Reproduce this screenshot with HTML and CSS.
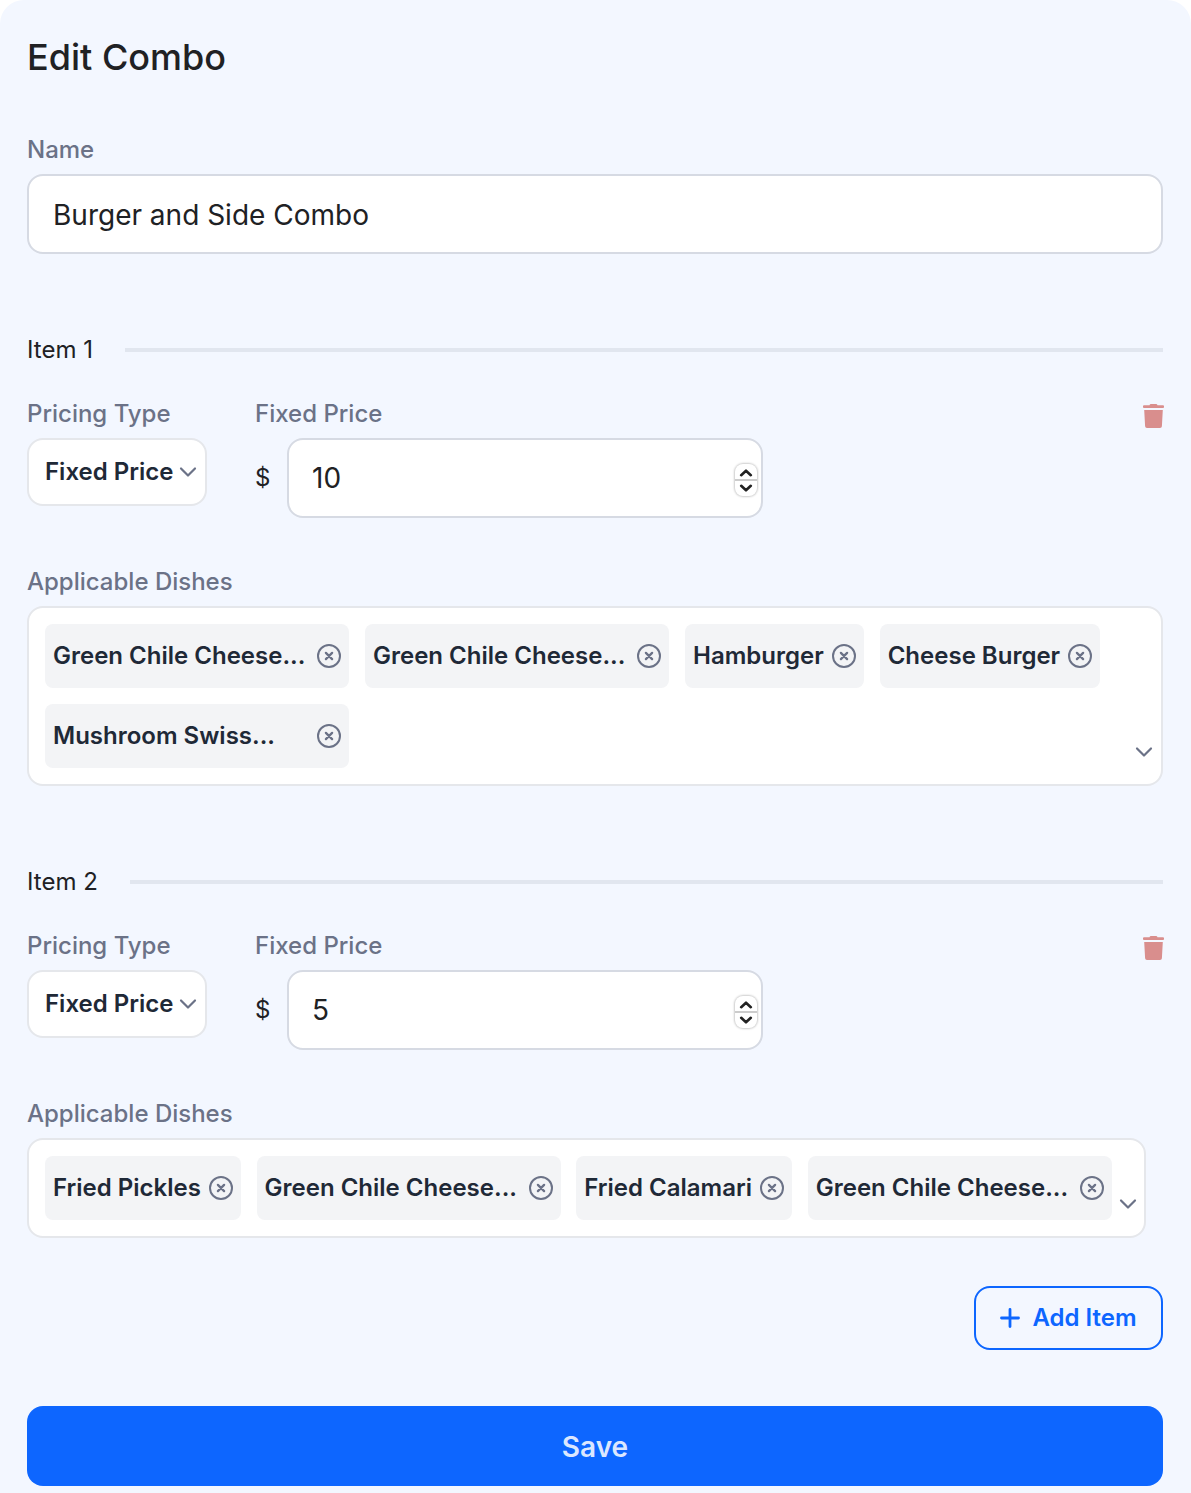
FILE: index.html
```html
<!DOCTYPE html>
<html lang="en">
<head>
<meta charset="utf-8">
<title>Edit Combo</title>
<link rel="stylesheet" href="styles.css">
</head>
<body>
<svg class="sprite" aria-hidden="true">
  <symbol id="chevron" viewBox="0 0 20 12"><path d="M3 2.500l7 7 7-7" fill="none" stroke="currentColor" stroke-width="2.200" stroke-linecap="round" stroke-linejoin="round"/></symbol>
  <symbol id="remove" viewBox="0 0 24 24"><circle cx="12" cy="12" r="11" fill="none" stroke="currentColor" stroke-width="2"/><path d="M8.900 8.900l6.200 6.200M15.100 8.900l-6.200 6.200" fill="none" stroke="currentColor" stroke-width="2.300" stroke-linecap="round"/></symbol>
  <symbol id="trash" viewBox="0 0 22 24"><path d="M6.500 1.200Q6.800 0 8 0h5q1.200 0 1.500 1.200H20q1 0 1 1v1q0 .8-1 .8H1q-1 0-1-.8v-1q0-1 1-1zM1.200 6h18.600l-.9 16.200q-.1 1.800-1.900 1.800H4q-1.800 0-1.900-1.800z" fill="currentColor"/></symbol>
  <symbol id="plus" viewBox="0 0 20 20"><path d="M10 1.500v17M1.500 10h17" fill="none" stroke="currentColor" stroke-width="2.800" stroke-linecap="round"/></symbol>
  <symbol id="step" viewBox="0 0 14 8"><path d="M2.200 6.200L7 1.700l4.800 4.500" fill="none" stroke="currentColor" stroke-width="2.600" stroke-linecap="round" stroke-linejoin="round"/></symbol>
</svg>
<main class="panel">
  <h1 class="title">Edit Combo</h1>
  <label class="label" for="name">Name</label>
  <input class="input" id="name" value="Burger and Side Combo">

  <section class="item">
    <h2 class="item-head">Item 1</h2>
    <div class="pricing">
      <div class="type">
        <span class="label">Pricing Type</span>
        <button class="select">Fixed Price<svg class="chevron"><use href="#chevron"/></svg></button>
      </div>
      <div class="price">
        <label class="label" for="price1">Fixed Price</label>
        <div class="money">
          <span class="currency">$</span>
          <div class="number">
            <input class="number-input" id="price1" value="10">
            <span class="stepper"><span class="step"><svg><use href="#step"/></svg></span><span class="step step-down"><svg><use href="#step"/></svg></span></span>
          </div>
        </div>
      </div>
      <button class="delete" aria-label="Delete"><svg><use href="#trash"/></svg></button>
    </div>
    <span class="label">Applicable Dishes</span>
    <div class="dishes">
      <div class="tags">
        <span class="tag"><span class="tag-text tag-clamped">Green Chile Cheese...</span><svg><use href="#remove"/></svg></span>
        <span class="tag"><span class="tag-text tag-clamped">Green Chile Cheese...</span><svg><use href="#remove"/></svg></span>
        <span class="tag"><span class="tag-text">Hamburger</span><svg><use href="#remove"/></svg></span>
        <span class="tag"><span class="tag-text">Cheese Burger</span><svg><use href="#remove"/></svg></span>
        <span class="tag"><span class="tag-text tag-clamped">Mushroom Swiss...</span><svg><use href="#remove"/></svg></span>
      </div>
      <svg class="chevron"><use href="#chevron"/></svg>
    </div>
  </section>

  <section class="item">
    <h2 class="item-head">Item 2</h2>
    <div class="pricing">
      <div class="type">
        <span class="label">Pricing Type</span>
        <button class="select">Fixed Price<svg class="chevron"><use href="#chevron"/></svg></button>
      </div>
      <div class="price">
        <label class="label" for="price2">Fixed Price</label>
        <div class="money">
          <span class="currency">$</span>
          <div class="number">
            <input class="number-input" id="price2" value="5">
            <span class="stepper"><span class="step"><svg><use href="#step"/></svg></span><span class="step step-down"><svg><use href="#step"/></svg></span></span>
          </div>
        </div>
      </div>
      <button class="delete" aria-label="Delete"><svg><use href="#trash"/></svg></button>
    </div>
    <span class="label">Applicable Dishes</span>
    <div class="dishes dishes-fit">
      <div class="tags">
        <span class="tag"><span class="tag-text">Fried Pickles</span><svg><use href="#remove"/></svg></span>
        <span class="tag"><span class="tag-text tag-clamped">Green Chile Cheese...</span><svg><use href="#remove"/></svg></span>
        <span class="tag"><span class="tag-text">Fried Calamari</span><svg><use href="#remove"/></svg></span>
        <span class="tag"><span class="tag-text tag-clamped">Green Chile Cheese...</span><svg><use href="#remove"/></svg></span>
      </div>
      <svg class="chevron"><use href="#chevron"/></svg>
    </div>
  </section>

  <button class="add"><svg><use href="#plus"/></svg>Add Item</button>
  <button class="save">Save</button>
</main>
</body>
</html>
```

FILE: styles.css
```css
* { box-sizing: border-box; }
body { margin: 0; background: #fff; font-family: Inter, sans-serif; color: #202124; }
button, input { font: inherit; margin: 0; }
svg { display: block; flex: none; }
.sprite { width: 0; height: 0; position: absolute; }
.panel { display: flex; flex-direction: column; height: 1493px; overflow: hidden; padding: 35px 28px 0 27px; background: #f3f7ff; border-radius: 24px 24px 0 0; }
.title { margin: 0 0 55px; font-size: 36px; line-height: 44px; font-weight: 500; }
.label { display: block; margin-bottom: 8px; font-size: 24px; line-height: 32px; font-weight: 500; color: #6b7287; }
.input, .number, .select, .dishes { background: #fff; border: 2px solid #d6dae3; border-radius: 16px; }
.input { width: 100%; height: 80px; padding: 2px 24px 0; font-size: 28px; color: #202124; }
.item { display: flex; flex-direction: column; margin-top: 80px; }
.item-head { display: flex; align-items: center; gap: 32px; margin: 0 0 32px; font-size: 24px; line-height: 32px; font-weight: 400; }
.item-head::after { content: ""; flex: 1; height: 4px; background: #e1e6ef; }
.pricing { display: flex; margin-bottom: 48px; }
.type { width: 180px; margin-right: 48px; }
.select { display: flex; align-items: center; justify-content: space-between; width: 180px; height: 68px; padding: 0 7px 2px 16px; border-color: #e5e7eb; font-size: 24px; font-weight: 600; color: #1f2937; white-space: nowrap; }
.select .chevron { margin-top: 2px; }
.chevron { width: 20px; height: 12px; color: #6b7287; }
.price { width: 508px; }
.money { display: flex; align-items: center; justify-content: space-between; }
.currency { padding-bottom: 2px; font-size: 24px; }
.number { display: flex; align-items: center; width: 476px; height: 80px; padding: 0 4px 0 23px; }
.number-input { flex: 1; min-width: 0; padding: 0; border: 0; outline: 0; background: none; font-size: 28px; color: #202124; }
.stepper { width: 22px; height: 32px; margin-top: 4px; border-radius: 8px; background: #fff; box-shadow: 0 0 2px 1px #0003; }
.step { display: flex; height: 16px; padding-top: 2px; align-items: center; justify-content: center; color: #222; border-bottom: 1px solid #ccc; }
.step svg { width: 14px; height: 8px; }
.step-down { padding: 0 0 1px; border-bottom: 0; border-top: 1px solid #ccc; }
.step-down svg { transform: scaleY(-1); }
.delete { align-self: flex-start; margin: 6px -2px 0 auto; padding: 0; border: 0; background: none; color: #d98e8d; }
.delete svg { width: 22px; height: 24px; }
.dishes { display: flex; align-items: flex-end; justify-content: space-between; padding: 16px 7px 16px 16px; border-color: #e5e7eb; }
.dishes .chevron { margin-bottom: 10px; }
.dishes-fit { align-self: flex-start; width: 1119px; padding-right: 6px; }
.tags { display: flex; flex-wrap: wrap; gap: 16px; }
.dishes-fit .tags { column-gap: 15.700px; }
.tag { display: flex; align-items: center; gap: 8px; height: 64px; padding: 0 8px; border-radius: 8px; background: #f3f4f6; font-size: 24px; font-weight: 600; color: #1f2937; white-space: nowrap; }
.tag-text { padding-bottom: 1px; }
.tag-clamped { width: 256px; }
.tag svg { width: 24px; height: 24px; color: #6b7287; }
.add { display: flex; align-items: center; align-self: flex-end; gap: 13px; width: 189px; height: 64px; margin: 48px 0 56px; padding: 0 0 1px 23.500px; border: 2px solid #0d66ff; border-radius: 16px; background: none; color: #0d66ff; font-size: 24px; font-weight: 600; white-space: nowrap; }
.add svg { width: 20px; height: 20px; }
.save { height: 80px; flex: none; padding: 2px 0 0; border: 0; border-radius: 16px; background: #0d66ff; color: #dbe7ff; font-size: 28px; font-weight: 600; }
```
